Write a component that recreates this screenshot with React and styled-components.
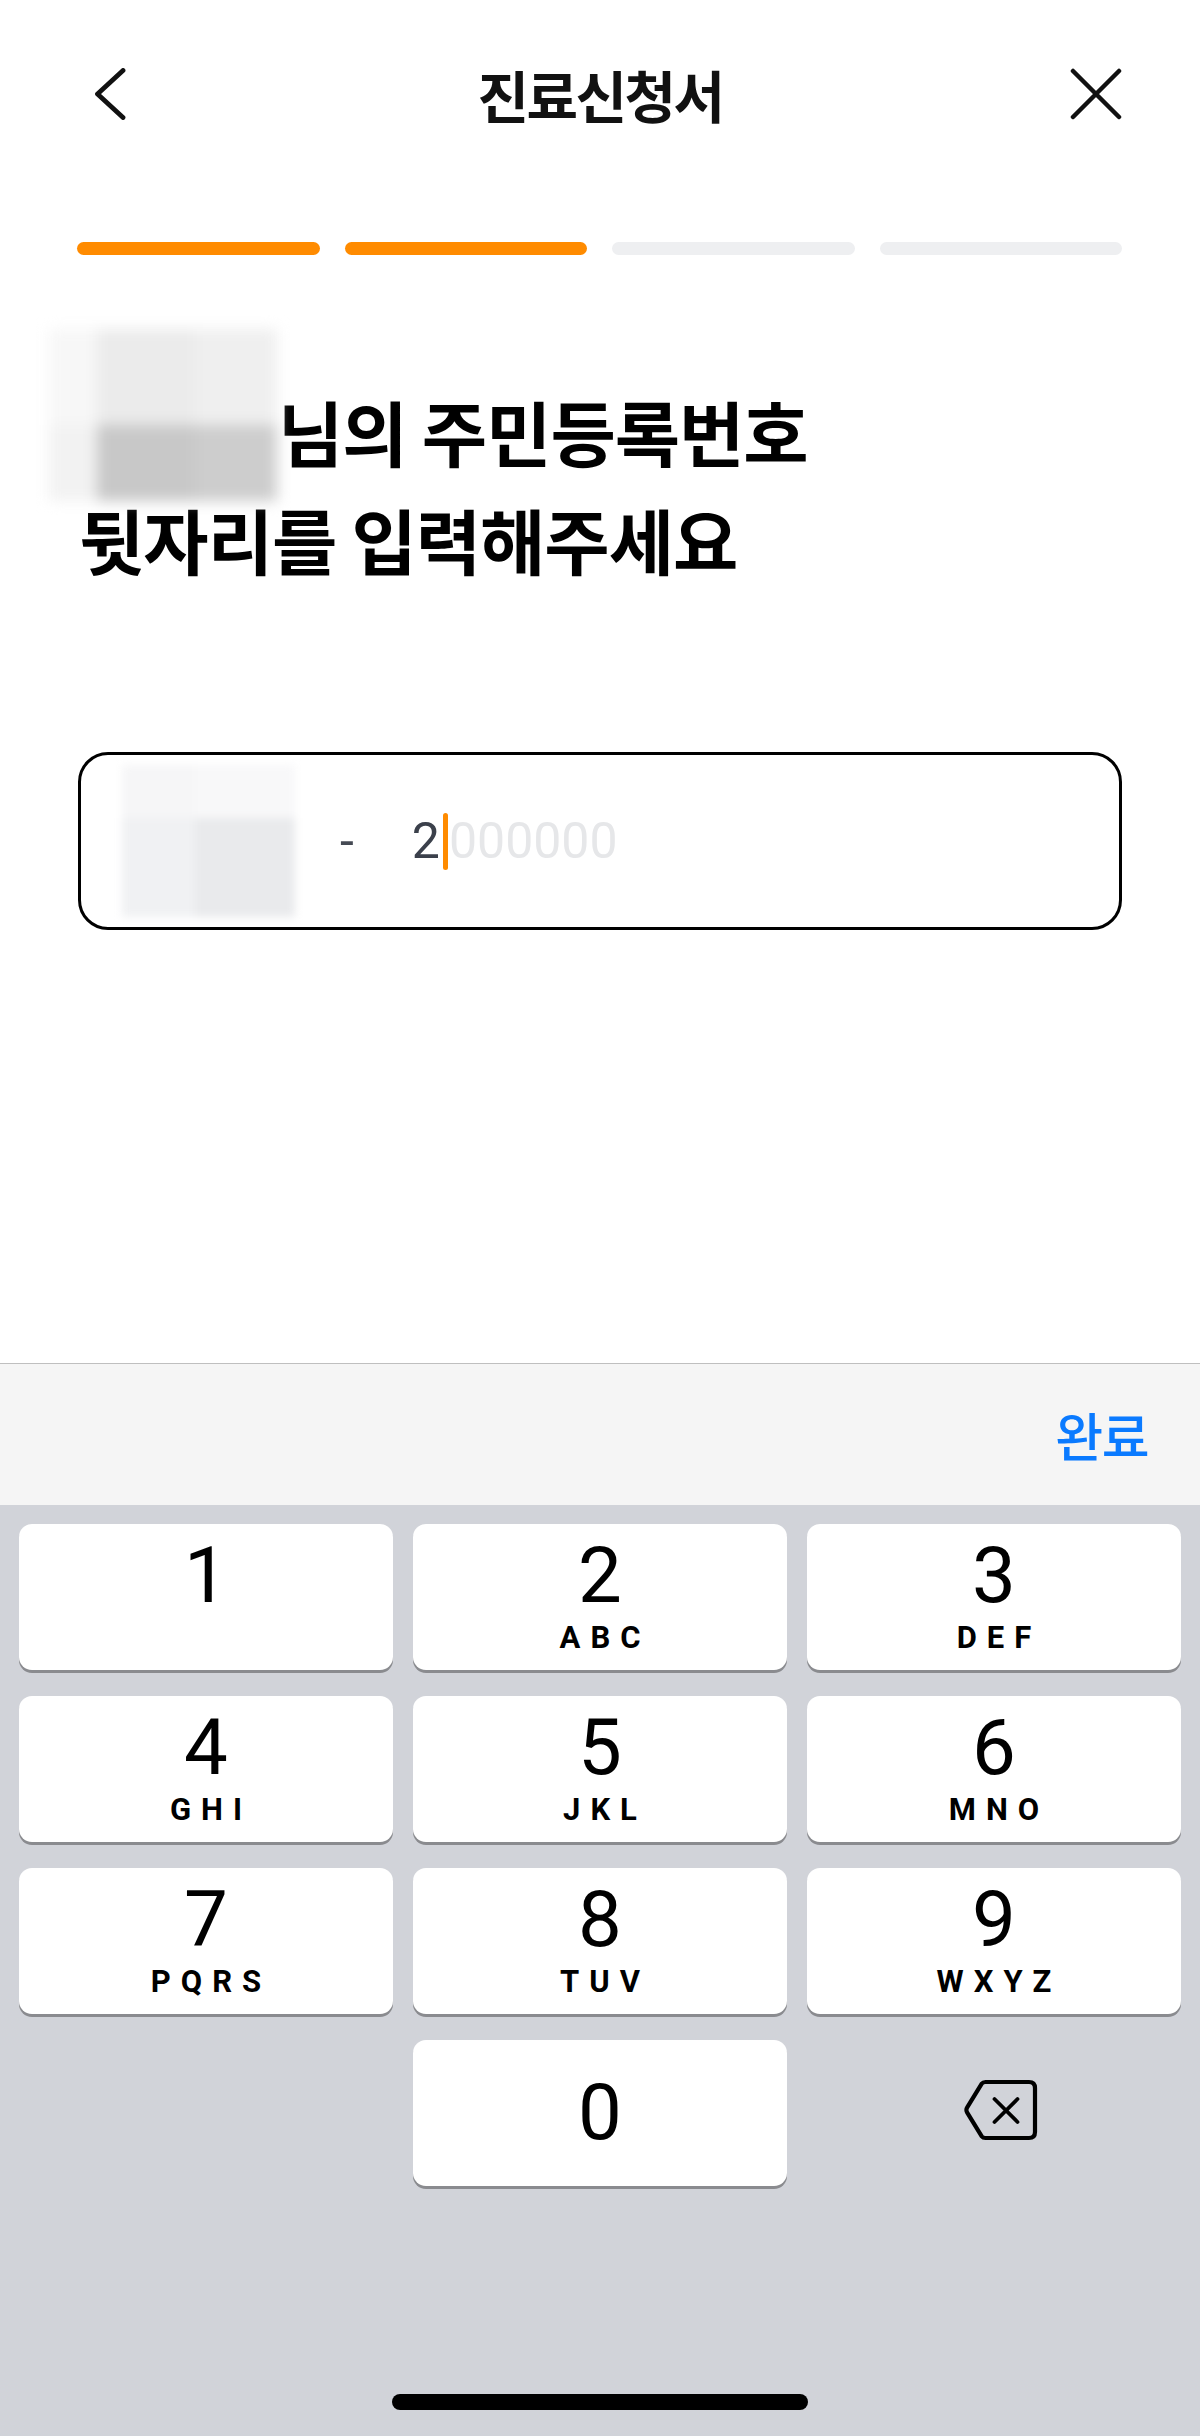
import React from "react";
import styled, { createGlobalStyle } from "styled-components";

const GlobalStyle = createGlobalStyle`
  html, body { margin: 0; padding: 0; background: #ffffff; }
  body { font-family: "Noto Sans CJK KR", "Noto Sans", sans-serif; -webkit-font-smoothing: antialiased; }
  * { box-sizing: border-box; }
`;

const Page = styled.div`
  width: 1200px;
  height: 2436px;
  display: flex;
  flex-direction: column;
  background: #ffffff;
  overflow: hidden;
`;

const Header = styled.header`
  margin-top: 68px;
  height: 52px;
  padding: 0 78px;
  display: grid;
  grid-template-columns: 1fr auto 1fr;
  align-items: center;
`;

const HeaderSide = styled.div`
  display: flex;
  justify-content: ${(p) => (p.$end ? "flex-end" : "flex-start")};
  padding-left: ${(p) => (p.$end ? "0" : "16px")};
`;

const IconButton = styled.button`
  border: 0;
  background: none;
  padding: 0;
  display: flex;
  cursor: pointer;
`;

const Title = styled.h1`
  margin: 0;
  font-family: "Noto Sans CJK KR", sans-serif;
  font-size: 56px;
  line-height: 52px;
  font-weight: 700;
  letter-spacing: -2.5px;
  color: #111111;
`;

const Progress = styled.div`
  margin-top: 122px;
  padding: 0 78px 0 77px;
  display: flex;
  gap: 25px;
`;

const Segment = styled.div`
  flex: 1;
  height: 13px;
  border-radius: 7px;
  background: ${(p) => (p.$active ? "#ff8b00" : "#eeeff1")};
`;

const Heading = styled.h2`
  margin: 121px 0 0;
  padding-left: 79px;
  font-family: "Noto Sans CJK KR", sans-serif;
  font-size: 71px;
  line-height: 108px;
  font-weight: 700;
  letter-spacing: -1px;
  color: #000000;
`;

const NameMask = styled.span`
  position: relative;
  display: inline-block;
  width: 199px;
  height: 1px;
`;

const MaskGrid = styled.span`
  position: absolute;
  display: grid;
  filter: blur(${(p) => p.$blur}px);
  ${(p) => p.$pos}
`;

const MaskCell = styled.span`
  display: block;
  background: ${(p) => p.$c};
`;

const InputBox = styled.div`
  margin: 160px 78px 0;
  height: 178px;
  border: 3px solid #000000;
  border-radius: 30px;
  display: flex;
  align-items: center;
  padding-left: 41px;
`;

const FrontMask = styled.div`
  width: 173px;
  height: 152px;
  display: grid;
  grid-template-columns: 73px 100px;
  grid-template-rows: 53px 99px;
  filter: blur(4px);
`;

const Dash = styled.span`
  margin-left: 45px;
  font-family: Roboto, "Liberation Sans", sans-serif;
  font-size: 50px;
  color: #454a54;
`;

const Digits = styled.div`
  margin-left: 58px;
  display: flex;
  align-items: center;
  font-family: Roboto, "Liberation Sans", sans-serif;
  font-size: 50px;
`;

const Typed = styled.span`
  color: #3b404b;
`;

const Caret = styled.span`
  width: 5px;
  height: 57px;
  margin: 0 1px 0 3px;
  border-radius: 3px;
  background: #ff8b00;
`;

const Placeholder = styled.span`
  color: #e6e7e9;
`;

const Spacer = styled.div`
  flex: 1;
`;

const Accessory = styled.div`
  height: 142px;
  border-top: 1px solid #bfbfbf;
  background: #f5f5f5;
  display: flex;
  justify-content: flex-end;
  align-items: center;
  padding-right: 52px;
`;

const Done = styled.button`
  border: 0;
  background: none;
  padding: 0;
  font-family: "Noto Sans CJK KR", sans-serif;
  font-size: 52px;
  font-weight: 500;
  letter-spacing: -1.5px;
  color: #0a7aff;
  cursor: pointer;
`;

const Keypad = styled.div`
  height: 931px;
  background: #d1d3d9;
  padding: 19px 19px 26px;
  display: flex;
  flex-direction: column;
`;

const KeyGrid = styled.div`
  display: grid;
  grid-template-columns: repeat(3, 1fr);
  grid-auto-rows: 146px;
  column-gap: 20px;
  row-gap: 26px;
`;

const Key = styled.button`
  border: 0;
  border-radius: 13px;
  background: #ffffff;
  box-shadow: 0 3px 0 #8a8b8f;
  display: flex;
  flex-direction: column;
  align-items: center;
  justify-content: ${(p) => (p.$centered ? "center" : "flex-start")};
  padding: ${(p) => (p.$centered ? "0" : "13px 0 0")};
  color: #000000;
  cursor: pointer;
`;

const KeyDigit = styled.span`
  font-family: Roboto, "Liberation Sans", sans-serif;
  font-size: 78px;
  line-height: 78px;
  font-weight: 400;
`;

const KeyLetters = styled.span`
  margin-top: 7px;
  padding-left: 10px;
  font-family: Roboto, "Liberation Sans", sans-serif;
  font-size: 31px;
  line-height: 31px;
  font-weight: 700;
  letter-spacing: 10px;
`;

const EmptyCell = styled.div``;

const DeleteCell = styled.button`
  border: 0;
  background: transparent;
  display: flex;
  align-items: center;
  justify-content: center;
  padding: 0 0 6px 14px;
  cursor: pointer;
`;

const HomeBar = styled.div`
  margin-top: auto;
  align-self: center;
  width: 416px;
  height: 16px;
  border-radius: 8px;
  background: #000000;
`;

const keys = [
  ["1", ""],
  ["2", "ABC"],
  ["3", "DEF"],
  ["4", "GHI"],
  ["5", "JKL"],
  ["6", "MNO"],
  ["7", "PQRS"],
  ["8", "TUV"],
  ["9", "WXYZ"],
];

const nameCells = [
  "#f7f7f7", "#ebebeb", "#efefef",
  "#f2f2f2", "#c8c8c8", "#cdcdcd",
];

const frontCells = ["#f6f6f7", "#f8f8f9", "#f0f1f3", "#e9eaec"];

export default function App() {
  return (
    <Page>
      <GlobalStyle />
      <Header>
        <HeaderSide>
          <IconButton aria-label="뒤로">
            <svg width="32" height="52" viewBox="0 0 32 52">
              <path d="M29 2.5 L3.5 26 L29 49.5" fill="none" stroke="#111" strokeWidth="4.8" strokeLinecap="round" strokeLinejoin="round" />
            </svg>
          </IconButton>
        </HeaderSide>
        <Title>진료신청서</Title>
        <HeaderSide $end>
          <IconButton aria-label="닫기">
            <svg width="52" height="52" viewBox="0 0 52 52">
              <path d="M3 3 L49 49 M49 3 L3 49" fill="none" stroke="#111" strokeWidth="4.5" strokeLinecap="round" />
            </svg>
          </IconButton>
        </HeaderSide>
      </Header>

      <Progress>
        {[true, true, false, false].map((a, i) => (
          <Segment key={i} $active={a} />
        ))}
      </Progress>

      <Heading>
        <NameMask aria-hidden="true">
          <MaskGrid
            $blur={7}
            $pos="left:-30px;bottom:-40px;width:228px;height:172px;grid-template-columns:48px 98px 82px;grid-template-rows:96px 76px;"
          >
            {nameCells.map((c, i) => (
              <MaskCell key={i} $c={c} />
            ))}
          </MaskGrid>
        </NameMask>
        님의 주민등록번호
        <br />
        뒷자리를 입력해주세요
      </Heading>

      <InputBox>
        <FrontMask aria-hidden="true">
          {frontCells.map((c, i) => (
            <MaskCell key={i} $c={c} />
          ))}
        </FrontMask>
        <Dash>-</Dash>
        <Digits>
          <Typed>2</Typed>
          <Caret />
          <Placeholder>000000</Placeholder>
        </Digits>
      </InputBox>

      <Spacer />

      <Accessory>
        <Done>완료</Done>
      </Accessory>

      <Keypad>
        <KeyGrid>
          {keys.map(([d, l]) => (
            <Key key={d}>
              <KeyDigit>{d}</KeyDigit>
              {l && <KeyLetters>{l}</KeyLetters>}
            </Key>
          ))}
          <EmptyCell />
          <Key $centered>
            <KeyDigit>0</KeyDigit>
          </Key>
          <DeleteCell aria-label="삭제">
            <svg width="76" height="62" viewBox="0 0 76 62">
              <path
                d="M22.5 3 H66 Q72 3 72 9 V53 Q72 59 66 59 H22.5 Q20 59 18.6 57.2 L4.2 33.6 Q2.6 31 4.2 28.4 L18.6 4.8 Q20 3 22.5 3 Z"
                fill="none"
                stroke="#000"
                strokeWidth="4.2"
                strokeLinejoin="round"
              />
              <path d="M31.5 20 L54.5 43 M54.5 20 L31.5 43" fill="none" stroke="#000" strokeWidth="3.8" strokeLinecap="round" />
            </svg>
          </DeleteCell>
        </KeyGrid>
        <HomeBar />
      </Keypad>
    </Page>
  );
}
